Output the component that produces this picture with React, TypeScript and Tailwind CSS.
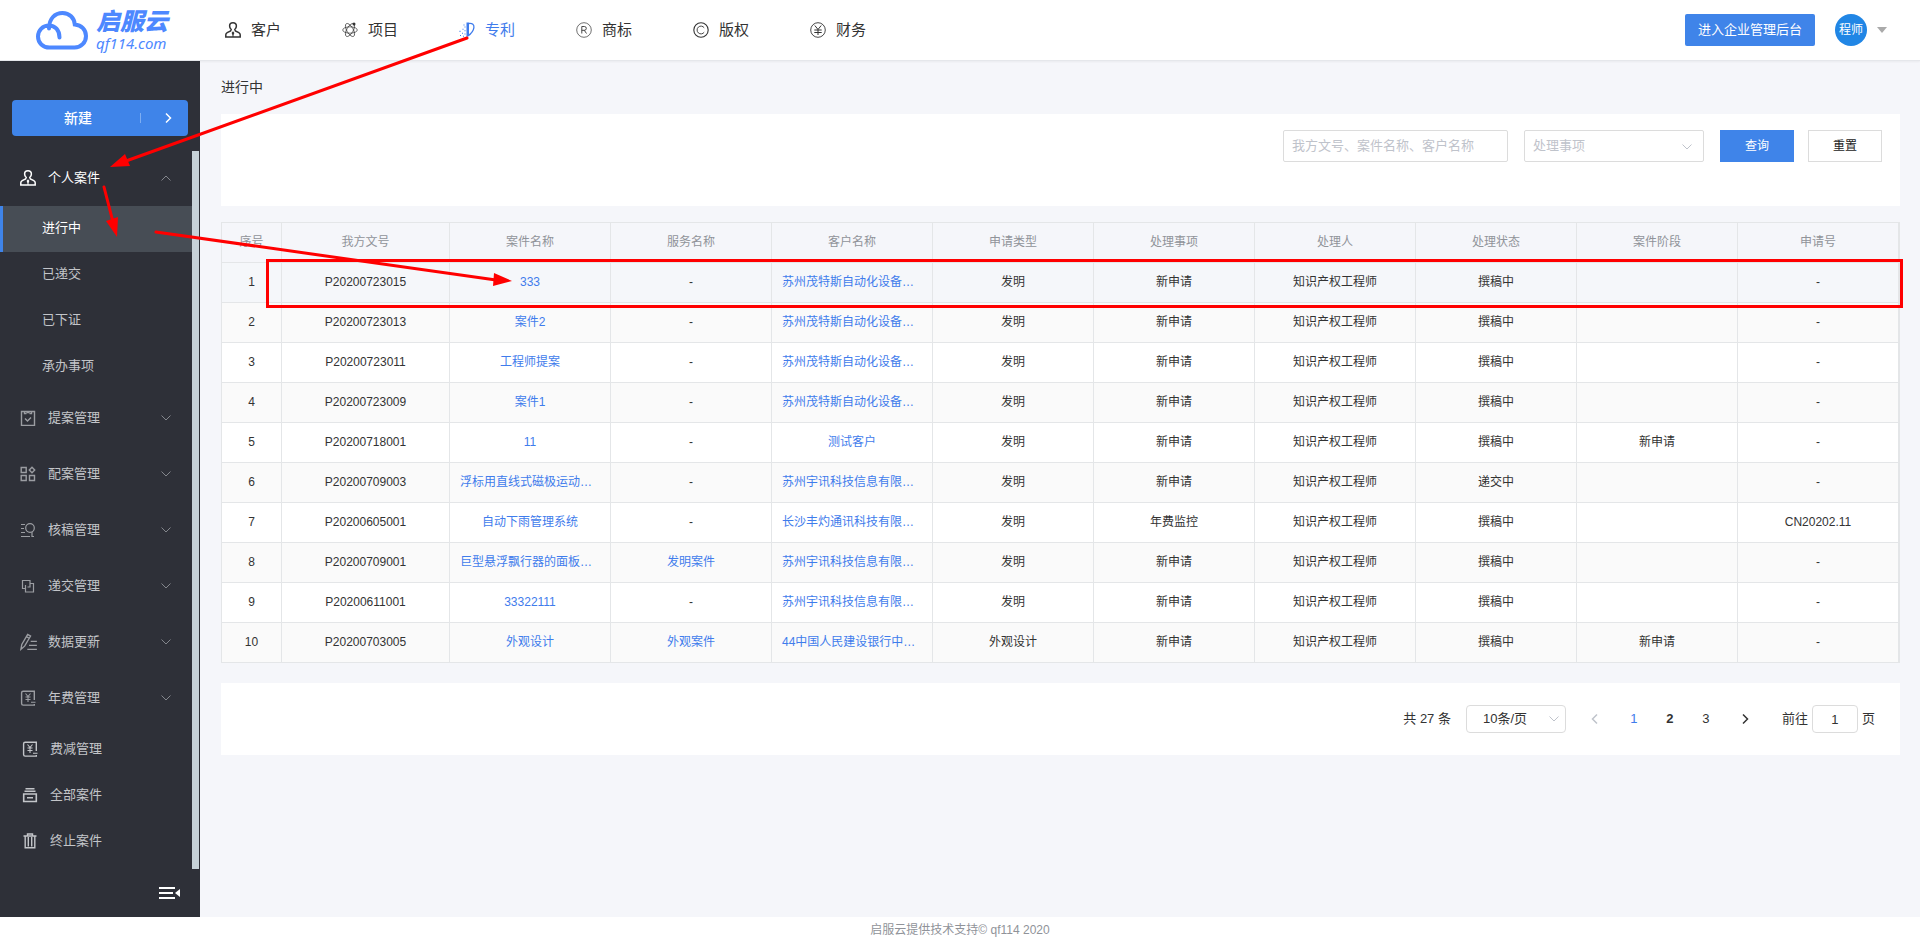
import type { ReactNode } from "react";

type IconProps = { children: ReactNode; className?: string };

const Icon = ({ children, className = "size-4" }: IconProps) => (
  <svg
    viewBox="0 0 16 16"
    fill="none"
    stroke="currentColor"
    strokeWidth={1.4}
    className={`shrink-0 ${className}`}
    aria-hidden="true"
  >
    {children}
  </svg>
);

const PersonIcon = () => (
  <Icon>
    <path d="M8 .8C5.900.8 4.600 2 4.600 4c0 1.500.7 2.700 1.600 3.500L5.600 9l-3.400 1.600c-1 .5-1.400 1.200-1.400 2.200V15h14.400v-2.200c0-1-.4-1.700-1.400-2.200L10.400 9l-.6-1.500c.9-.8 1.600-2 1.600-3.500 0-2-1.300-3.200-3.400-3.200z" strokeWidth={1.500} />
    <path d="M8 9.200L6.600 11 8 13.600 9.400 11z" fill="currentColor" stroke="none" />
    <path d="M8 12v3" strokeWidth={1} />
  </Icon>
);

const AtomIcon = () => (
  <Icon>
    <g strokeWidth={0.7}>
      <ellipse cx="8" cy="8" rx="7.300" ry="3.200" />
      <ellipse cx="8" cy="8" rx="7.300" ry="3.200" transform="rotate(60 8 8)" />
      <ellipse cx="8" cy="8" rx="7.300" ry="3.200" transform="rotate(120 8 8)" />
    </g>
    <circle cx="12" cy="2" r="1.500" fill="currentColor" stroke="none" />
  </Icon>
);

const PatentIcon = () => (
  <Icon>
    <path d="M7.500.5v15l2.500-2V.5z" fill="currentColor" stroke="none" />
    <path d="M10 1.500c3.400-.4 5.300 1.200 4.900 4.100-.4 3-2.400 5.800-6 8.400" strokeWidth={1.300} />
    <path
      d="M5.500 5h1M3.500 7.200h1M.5 9.400h1M5.500 8.800h1M3 11.200h1M5.500 12h1M1 13.500h1M4 14.200h1M4.500 3h1"
      strokeWidth={1.100}
    />
  </Icon>
);

const RegisteredIcon = () => (
  <Icon>
    <circle cx="8" cy="8" r="7.300" strokeWidth={0.7} />
    <path d="M5.800 11.500v-7h2.600a1.900 1.900 0 010 3.800H5.800M8.300 8.300l2.200 3.200" strokeWidth={0.9} />
  </Icon>
);

const CopyrightIcon = () => (
  <Icon>
    <circle cx="8" cy="8" r="7.200" strokeWidth={1.100} />
    <path d="M11.200 5.800a3.900 3.900 0 100 4.400" strokeWidth={0.9} />
  </Icon>
);

const YenIcon = () => (
  <Icon>
    <circle cx="8" cy="8" r="7.300" strokeWidth={0.9} />
    <path d="M4.800 3.500L8 7.500l3.200-4M8 7.500V13M4.300 8h7.400M4.300 10.500h7.400" strokeWidth={1} />
  </Icon>
);

const ClipboardIcon = () => (
  <Icon>
    <path d="M1.500 1.500h13v14h-13z" />
    <path d="M4.500 1.500v2h2M11.500 1.500v2h-2M6.500 2.500h3M5 8.500l2.500 2.500L11 7.500" />
  </Icon>
);

const BlocksIcon = () => (
  <Icon>
    <path d="M1.200 1.500h5v5h-5zM1.200 9.500h5v5h-5zM9.500 9.500h5v5h-5zM12 1.300l2.700 2.700L12 6.700 9.300 4z" />
  </Icon>
);

const ReviewIcon = () => (
  <Icon>
    <circle cx="10" cy="6" r="4.300" strokeWidth={1.200} />
    <path d="M1 2.500h4M1 6.500h3M1 10.500h4M1 14.500h9M12 10v4.500h2" strokeWidth={1.200} />
  </Icon>
);

const CopyIcon = () => (
  <Icon>
    <path d="M6 10.500H2.500v-8h7.500V9H7.500M9.500 5.500h4v8.500h-8V7" strokeWidth={1.200} />
  </Icon>
);

const EditIcon = () => (
  <Icon className="size-[18px]">
    <path d="M.8 14.500l.8-4.300L6.800 1.200l2.600 1.500-5.300 9zM5.600 3.200l2.600 1.500M9.500 7.500H15M8 11h7M6.500 14.500H15" strokeWidth={1.200} />
  </Icon>
);

const FeeIcon = () => (
  <Icon>
    <path d="M14.300 10V1.200H3.200c-1 0-1.600.6-1.600 1.500v10.800c0 1 .6 1.600 1.600 1.600h11.100v-1" />
    <path d="M5.500 3.500L8 6.500l2.500-3M8 6.500V12M5.500 7h5M5.500 9.500h5M11 12.300h4.500" strokeWidth={1.100} />
  </Icon>
);

const ArchiveIcon = () => (
  <Icon>
    <path d="M1.700 7h12.600v7.500H1.700zM2.500 4.300h11M3.500 1.700h9M5 10.700h6" strokeWidth={1.600} />
  </Icon>
);

const TrashIcon = () => (
  <Icon>
    <path d="M1.500 3h13M5.500 2.500V1h5v1.500M3.200 3.500v11.200h9.600V3.500M6.300 4v9.500M9.700 4v9.500" />
  </Icon>
);

const Chevron = ({ d, className }: { d: string; className: string }) => (
  <svg
    viewBox="0 0 12 12"
    fill="none"
    stroke="currentColor"
    className={`shrink-0 ${className}`}
    aria-hidden="true"
  >
    <path d={d} />
  </svg>
);

const DOWN = "M1.500 3.500L6 8l4.500-4.500";
const UP = "M1.500 8.500L6 4l4.500 4.500";
const LEFT = "M8 1.500L3.500 6 8 10.500";
const RIGHT = "M4 1.500L8.500 6 4 10.500";

const navItems = [
  { label: "客户", icon: <PersonIcon /> },
  { label: "项目", icon: <AtomIcon /> },
  { label: "专利", icon: <PatentIcon />, active: true },
  { label: "商标", icon: <RegisteredIcon /> },
  { label: "版权", icon: <CopyrightIcon /> },
  { label: "财务", icon: <YenIcon /> },
];

const personalItems = ["进行中", "已递交", "已下证", "承办事项"];

const groups = [
  { label: "提案管理", icon: <ClipboardIcon /> },
  { label: "配案管理", icon: <BlocksIcon /> },
  { label: "核稿管理", icon: <ReviewIcon /> },
  { label: "递交管理", icon: <CopyIcon /> },
  { label: "数据更新", icon: <EditIcon /> },
  { label: "年费管理", icon: <FeeIcon /> },
];

const singles = [
  { label: "费减管理", icon: <FeeIcon /> },
  { label: "全部案件", icon: <ArchiveIcon /> },
  { label: "终止案件", icon: <TrashIcon /> },
];

const columns = [
  "序号",
  "我方文号",
  "案件名称",
  "服务名称",
  "客户名称",
  "申请类型",
  "处理事项",
  "处理人",
  "处理状态",
  "案件阶段",
  "申请号",
];

const engineer = "知识产权工程师";

const rows = [
  ["P20200723015", "333", "-", "苏州茂特斯自动化设备…", "发明", "新申请", engineer, "撰稿中", "", "-"],
  ["P20200723013", "案件2", "-", "苏州茂特斯自动化设备…", "发明", "新申请", engineer, "撰稿中", "", "-"],
  ["P20200723011", "工程师提案", "-", "苏州茂特斯自动化设备…", "发明", "新申请", engineer, "撰稿中", "", "-"],
  ["P20200723009", "案件1", "-", "苏州茂特斯自动化设备…", "发明", "新申请", engineer, "撰稿中", "", "-"],
  ["P20200718001", "11", "-", "测试客户", "发明", "新申请", engineer, "撰稿中", "新申请", "-"],
  ["P20200709003", "浮标用直线式磁极运动…", "-", "苏州宇讯科技信息有限…", "发明", "新申请", engineer, "递交中", "", "-"],
  ["P20200605001", "自动下雨管理系统", "-", "长沙丰灼通讯科技有限…", "发明", "年费监控", engineer, "撰稿中", "", "CN20202.11"],
  ["P20200709001", "巨型悬浮飘行器的面板…", "发明案件", "苏州宇讯科技信息有限…", "发明", "新申请", engineer, "撰稿中", "", "-"],
  ["P20200611001", "33322111", "-", "苏州宇讯科技信息有限…", "发明", "新申请", engineer, "撰稿中", "", "-"],
  ["P20200703005", "外观设计", "外观案件", "44中国人民建设银行中…", "外观设计", "新申请", engineer, "撰稿中", "新申请", "-"],
];

// case, service and customer names open their detail pages
const isLink = (col: number, value: string) =>
  col >= 1 && col <= 3 && value !== "-";

const Logo = () => (
  <a href="#" className="flex w-[200px] shrink-0 items-center gap-2 pl-9 text-[#4d88ff]">
    <svg viewBox="0 0 52 40" fill="none" stroke="currentColor" className="h-10 w-[52px] shrink-0" aria-hidden="true">
      <path
        d="M13 18.500C13 8.500 19 3 26.500 3 33.500 3 38.300 8 38.800 14.500 45.500 15 50 19.800 50 26c0 6.500-5 11.500-11.500 11.500h-25C7 37.500 2 33 2 26.500S7 15.500 13 15.500c6 0 10.500 4.500 10.500 12"
        strokeWidth={4}
        strokeLinecap="round"
      />
    </svg>
    <span className="flex flex-col italic">
      <span className="text-2xl leading-[26px] font-black">启服云</span>
      <span className="font-['Noto_Sans'] text-[15px] leading-4">qf114.com</span>
    </span>
  </a>
);

const Header = () => (
  <header className="relative z-10 flex h-[61px] items-center border-b border-gray-200 bg-white shadow-xs">
    <Logo />
    <nav className="flex gap-[61px] pl-[25px]">
      {navItems.map((item) => (
        <a
          key={item.label}
          href="#"
          className={`flex items-center gap-[10px] text-[15px] ${
            item.active ? "text-[#3f7cec]" : "text-[#333]"
          }`}
        >
          {item.icon}
          {item.label}
        </a>
      ))}
    </nav>
    <div className="ml-auto flex items-center pr-[33px]">
      <button className="h-8 rounded-xs bg-[#3f84e9] px-[13px] text-[13px] text-white">
        进入企业管理后台
      </button>
      <button className="ml-5 flex items-center gap-[10px]">
        <span className="flex size-8 items-center justify-center rounded-full bg-[#2186e5] text-xs text-white">
          程师
        </span>
        <svg viewBox="0 0 10 6" className="h-[6px] w-[10px] fill-[#aaa]" aria-hidden="true">
          <path d="M0 0h10L5 6z" />
        </svg>
      </button>
    </div>
  </header>
);

const Sidebar = () => (
  <aside className="flex w-[200px] shrink-0 flex-col bg-[#2e3038] text-[13px] text-[#c3c5c9]">
    <div className="px-3 pt-[39px] pb-[14px]">
      <button className="flex h-9 w-full items-center rounded-sm bg-[#3f84e9] text-sm font-medium text-white">
        <span className="flex-1 pl-1">新建</span>
        <span className="h-[10px] w-px bg-[#7eaef2]" />
        <span className="flex w-[47px] justify-center pl-[6px]">
          <Chevron d={RIGHT} className="size-3 stroke-[1.5]" />
        </span>
      </button>
    </div>
    <div className="flex pr-px">
      <nav className="flex-1 pb-[6px]">
        <button className="flex h-14 w-full items-center gap-3 pr-5 pl-5 text-white">
          <PersonIcon />
          个人案件
          <Chevron d={UP} className="ml-auto size-3 text-[#83868c]" />
        </button>
        {personalItems.map((label, index) => (
          <a
            key={label}
            href="#"
            className={`flex h-[46px] items-center border-l-3 pb-0.5 pl-[39px] ${
              index === 0
                ? "border-[#3f84e9] bg-[#474d55] text-white"
                : "border-transparent"
            }`}
          >
            {label}
          </a>
        ))}
        {groups.map((group) => (
          <button key={group.label} className="flex h-14 w-full items-center pr-5 pl-5">
            <span className="flex w-7 text-[#9b9da2]">{group.icon}</span>
            {group.label}
            <Chevron d={DOWN} className="ml-auto size-3 text-[#83868c]" />
          </button>
        ))}
        {singles.map((item) => (
          <a key={item.label} href="#" className="flex h-[46px] items-center gap-3 pl-[22px]">
            {item.icon}
            {item.label}
          </a>
        ))}
      </nav>
      <div className="my-px w-[7px] bg-[#c6d1d8]" />
    </div>
    <button className="mt-auto flex h-[47px] items-center justify-end pr-5 pb-0.5 text-white" aria-label="收起菜单">
      <svg viewBox="0 0 21 14" className="h-[14px] w-[21px]" fill="currentColor" aria-hidden="true">
        <path d="M0 1h16v2H0zM0 6h14v2H0zM0 11h16v2H0zM21 3v8l-5-4z" />
      </svg>
    </button>
  </aside>
);

const SearchPanel = () => (
  <form className="flex h-[92px] items-start justify-end bg-white pt-4 pr-[18px]">
    <input
      type="text"
      aria-label="关键字"
      placeholder="我方文号、案件名称、客户名称"
      className="h-8 w-[225px] rounded-xs border border-[#dcdcdc] px-2 pb-0.5 text-[13px] placeholder:text-[#bfc3cb]"
    />
    <div className="relative ml-4">
      <select
        aria-label="处理事项"
        defaultValue=""
        className="h-8 w-[180px] appearance-none rounded-xs border border-[#dcdcdc] px-2 text-[13px] text-[#bfc3cb]"
      >
        <option value="">处理事项</option>
      </select>
      <Chevron
        d={DOWN}
        className="pointer-events-none absolute top-[11px] right-[11px] size-3 text-[#bfc3cb]"
      />
    </div>
    <button type="button" className="ml-4 h-8 w-[74px] bg-[#3f84e9] text-xs text-white">
      查询
    </button>
    <button type="reset" className="ml-[14px] h-8 w-[74px] border border-[#dcdcdc] text-xs text-[#222]">
      重置
    </button>
  </form>
);

const CaseTable = () => (
  <div className="border-t border-r border-l border-[#e4e6e8]">
    <table className="w-full table-fixed border-separate border-spacing-0 text-center text-xs">
      <colgroup>
        <col className="w-[60px]" />
        <col className="w-[168px]" />
        <col span={9} />
      </colgroup>
      <thead>
        <tr className="h-10 bg-[#f5f6fa] text-[#909399]">
          {columns.map((name) => (
            <th key={name} className="border-r border-b border-[#e4e6e8] p-0 pb-0.5 font-normal">
              {name}
            </th>
          ))}
        </tr>
      </thead>
      <tbody className="text-[#333]">
        {rows.map((row, index) => (
          <tr
            key={row[0]}
            className={`h-10 ${
              index === 0 ? "bg-[#f5f7fa]" : index % 2 ? "bg-[#fafafa]" : "bg-white"
            }`}
          >
            <td className="border-r border-b border-[#e4e6e8] p-0 pb-0.5">{index + 1}</td>
            {row.map((value, col) => (
              <td
                key={col}
                className={`border-r border-b border-[#e4e6e8] px-[10px] pt-0 pb-0.5 whitespace-nowrap ${
                  value.endsWith("…") ? "text-left" : ""
                }`}
              >
                {isLink(col, value) ? (
                  <a href="#" className="text-[#3f7cec]">
                    {value}
                  </a>
                ) : (
                  value
                )}
              </td>
            ))}
          </tr>
        ))}
      </tbody>
    </table>
  </div>
);

const Pagination = () => (
  <div className="flex h-[72px] items-center justify-end bg-white pr-[25px] text-[13px] text-[#333]">
    <span>共 27 条</span>
    <div className="relative ml-[15px]">
      <select
        aria-label="每页条数"
        className="h-7 w-[100px] appearance-none rounded-sm border border-[#dcdcdc] pl-4 text-[13px]"
      >
        <option>10条/页</option>
      </select>
      <Chevron
        d={DOWN}
        className="pointer-events-none absolute top-2 right-[6px] size-3 text-[#bfc3cb]"
      />
    </div>
    <div className="ml-3 flex items-center">
      <button className="flex w-[34px] justify-center" aria-label="上一页">
        <Chevron d={LEFT} className="size-3 stroke-[1.5] text-[#bfc3cb]" />
      </button>
      <button className="ml-1 w-9 font-medium text-[#3f7cec]">1</button>
      <button className="w-9 font-bold">2</button>
      <button className="w-9 font-medium">3</button>
      <button className="ml-1 flex w-[34px] justify-center" aria-label="下一页">
        <Chevron d={RIGHT} className="size-3 stroke-[1.5]" />
      </button>
    </div>
    <label className="ml-5 flex items-center gap-1">
      前往
      <input
        type="text"
        defaultValue="1"
        className="h-7 w-[46px] rounded-sm border border-[#dcdcdc] text-center"
      />
      页
    </label>
  </div>
);

// Walkthrough marks drawn over the page
const Annotations = () => (
  <svg
    className="pointer-events-none absolute top-0 left-0 z-20 h-[937px] w-[1920px]"
    fill="none"
    stroke="#f00"
    strokeWidth={3}
    aria-hidden="true"
  >
    <path d="M467 38L126 161M104 187L113 222M156 232L496 280" strokeLinecap="round" />
    <path d="M110 167L125 154 130 166zM117 237L106 221 118 217zM512 281L493 286 494 273z" fill="#f00" stroke="none" />
    <rect x="267.500" y="260.500" width="1634" height="46" />
  </svg>
);

export default function App() {
  return (
    <div className="relative flex min-h-screen flex-col overflow-hidden bg-white font-['Liberation_Sans','Noto_Sans_CJK_SC',sans-serif]">
      <Header />
      <div className="flex flex-1">
        <Sidebar />
        <main className="min-w-0 flex-1 bg-[#f5f6fa] pr-5 pl-[21px]">
          <h1 className="flex h-[53px] items-center pb-0.5 text-sm text-[#333]">进行中</h1>
          <SearchPanel />
          <div className="py-4 pb-5">
            <CaseTable />
          </div>
          <Pagination />
        </main>
      </div>
      <footer className="flex h-5 items-center justify-center pt-[6px] text-xs text-[#909399]">
        启服云提供技术支持© qf114 2020
      </footer>
      <Annotations />
    </div>
  );
}
